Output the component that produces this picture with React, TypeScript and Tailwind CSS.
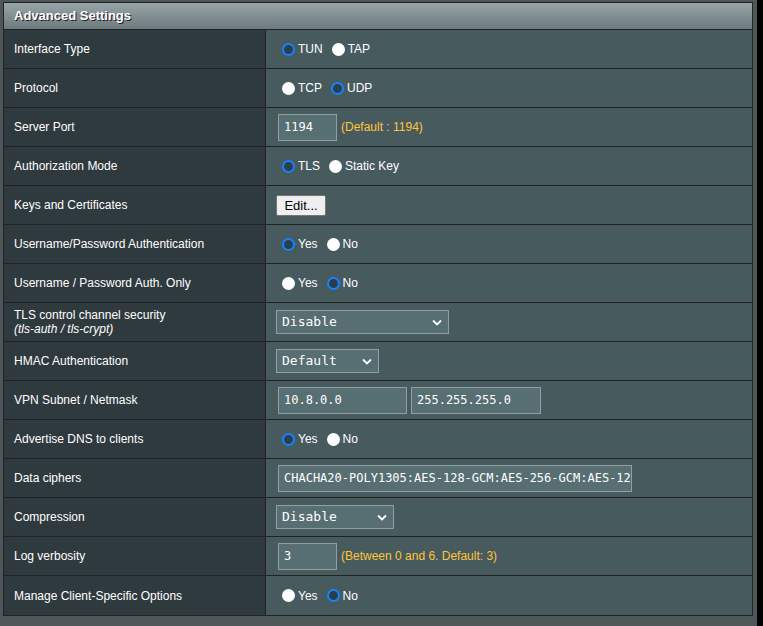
import React from "react";

type Opt = { label: string; on?: boolean };

function Radio({ on }: { on?: boolean }) {
  return on ? (
    <span className="inline-block w-[13px] h-[13px] rounded-full border-[2.5px] border-[#1583ff] bg-[#2c3e4a] box-border" />
  ) : (
    <span className="inline-block w-[13px] h-[13px] rounded-full bg-white box-border" />
  );
}

function Radios({ opts }: { opts: Opt[] }) {
  return (
    <div className="flex items-center pl-[6px] gap-[9px]">
      {opts.map((o) => (
        <label key={o.label} className="flex items-center">
          <Radio on={o.on} />
          <span className="ml-[3px] text-[12px] text-white">{o.label}</span>
        </label>
      ))}
    </div>
  );
}

function TextBox({ value, w }: { value: string; w: string }) {
  return (
    <div
      className={`${w} h-[27px] ml-[2px] flex items-center px-[5px] bg-[#576e72] border border-[#929fa2] text-white text-[12px] overflow-hidden whitespace-nowrap font-['DejaVu_Sans_Mono',monospace]`}
    >
      {value}
    </div>
  );
}

function Select({ value, w }: { value: string; w: string }) {
  return (
    <div
      className={`${w} h-[24px] flex items-center justify-between pl-[5px] pr-[6px] bg-[#576e72] border border-[#929fa2] text-white text-[13px] font-['DejaVu_Sans_Mono',monospace]`}
    >
      <span>{value}</span>
      <svg width="10" height="7" viewBox="0 0 10 7" fill="none">
        <path d="M1 1.5l4 4 4-4" stroke="#fff" strokeWidth="1.8" />
      </svg>
    </div>
  );
}

function Hint({ children }: { children: React.ReactNode }) {
  return <span className="ml-[4px] text-[12px] text-[#ffc437]">{children}</span>;
}

const rows: { label: React.ReactNode; content: React.ReactNode }[] = [
  { label: "Interface Type", content: <Radios opts={[{ label: "TUN", on: true }, { label: "TAP" }]} /> },
  { label: "Protocol", content: <Radios opts={[{ label: "TCP" }, { label: "UDP", on: true }]} /> },
  {
    label: "Server Port",
    content: (
      <div className="flex items-center">
        <TextBox value="1194" w="w-[59px]" />
        <Hint>(Default : 1194)</Hint>
      </div>
    ),
  },
  { label: "Authorization Mode", content: <Radios opts={[{ label: "TLS", on: true }, { label: "Static Key" }]} /> },
  {
    label: "Keys and Certificates",
    content: (
      <button className="h-[21px] w-[50px] bg-[#efefef] border border-[#767676] rounded-[2px] text-[13px] text-black leading-none">
        Edit...
      </button>
    ),
  },
  { label: "Username/Password Authentication", content: <Radios opts={[{ label: "Yes", on: true }, { label: "No" }]} /> },
  { label: "Username / Password Auth. Only", content: <Radios opts={[{ label: "Yes" }, { label: "No", on: true }]} /> },
  {
    label: (
      <div className="leading-[14px]">
        <div>TLS control channel security</div>
        <div className="italic">(tls-auth / tls-crypt)</div>
      </div>
    ),
    content: <Select value="Disable" w="w-[173px]" />,
  },
  { label: "HMAC Authentication", content: <Select value="Default" w="w-[103px]" /> },
  {
    label: "VPN Subnet / Netmask",
    content: (
      <div className="flex items-center gap-[2px]">
        <TextBox value="10.8.0.0" w="w-[129px]" />
        <TextBox value="255.255.255.0" w="w-[130px]" />
      </div>
    ),
  },
  { label: "Advertise DNS to clients", content: <Radios opts={[{ label: "Yes", on: true }, { label: "No" }]} /> },
  {
    label: "Data ciphers",
    content: <TextBox value="CHACHA20-POLY1305:AES-128-GCM:AES-256-GCM:AES-12" w="w-[354px]" />,
  },
  { label: "Compression", content: <Select value="Disable" w="w-[118px]" /> },
  {
    label: "Log verbosity",
    content: (
      <div className="flex items-center">
        <TextBox value="3" w="w-[59px]" />
        <Hint>(Between 0 and 6. Default: 3)</Hint>
      </div>
    ),
  },
  { label: "Manage Client-Specific Options", content: <Radios opts={[{ label: "Yes" }, { label: "No", on: true }]} /> },
];

export default function App() {
  return (
    <div className="flex w-[763px] h-[626px] bg-[#4d5659] font-['Liberation_Sans',Arial,sans-serif] overflow-hidden">
      <div className="w-[757px] pt-[2px] pl-[3px]">
        <div className="w-[750px] border border-[#222]">
          <div className="h-[27px] flex items-center px-[10px] bg-gradient-to-b from-[#98a5a9] to-[#6c797d] border-b border-[#222] text-white text-[13px] font-bold [text-shadow:1px_1px_0_#222]">
            Advanced Settings
          </div>
          {rows.map((r, i) => (
            <div
              key={i}
              className={`flex h-[39px] ${i < rows.length - 1 ? "border-b border-[#222]" : ""}`}
            >
              <div className="w-[262px] shrink-0 flex items-center px-[10px] bg-[#2f3a3e] border-r border-[#222] text-white text-[12px]">
                {r.label}
              </div>
              <div className="flex-1 flex items-center px-[10px] bg-[#475b5f]">{r.content}</div>
            </div>
          ))}
        </div>
      </div>
      <div className="w-[6px] bg-black" />
    </div>
  );
}
